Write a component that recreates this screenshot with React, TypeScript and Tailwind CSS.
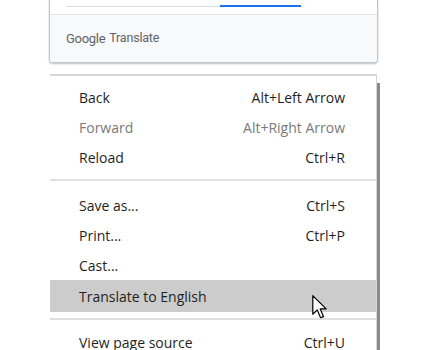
const GROUPS: { label: string; shortcut?: string; disabled?: boolean; active?: boolean }[][] = [
  [
    { label: "Back", shortcut: "Alt+Left Arrow" },
    { label: "Forward", shortcut: "Alt+Right Arrow", disabled: true },
    { label: "Reload", shortcut: "Ctrl+R" },
  ],
  [
    { label: "Save as...", shortcut: "Ctrl+S" },
    { label: "Print...", shortcut: "Ctrl+P" },
    { label: "Cast..." },
    { label: "Translate to English", active: true },
  ],
  [{ label: "View page source", shortcut: "Ctrl+U" }],
];

function Cursor() {
  return (
    <svg
      className="absolute left-[262px] top-[15px]"
      width="16"
      height="24"
      viewBox="0 0 13 20"
    >
      <path
        d="M0.5 0.5 L0.5 16 L4.2 12.4 L7 19 L9.4 18 L6.7 11.6 L11.6 11.6 Z"
        fill="#fff"
        stroke="#000"
        strokeWidth="1"
        strokeLinejoin="round"
      />
    </svg>
  );
}

export default function App() {
  return (
    <div className="w-[427px] h-[350px] bg-white overflow-hidden font-['Open_Sans',sans-serif]">
      {/* translate bubble, top cut off */}
      <div className="ml-[49px] w-[329px] border-x border-b border-[#c4c4c4] rounded-b-[4px] shadow-[0_1px_2px_rgba(0,0,0,0.25)] overflow-hidden">
        <div className="h-[15px] bg-white border-b border-[#e3e3e3] pl-[16px] pt-[5px]">
          <div className="flex w-[235px]">
            <div className="w-[154px] h-px mt-px bg-[#dadce0]" />
            <div className="w-[81px] h-[2px] bg-[#1a73e8]" />
          </div>
        </div>
        <div className="h-[47px] bg-[#f8f9fa] pl-[16px] flex items-center text-[12.5px] text-[#5f6368] font-['Roboto',sans-serif]">
          <span className="text-[13px] tracking-[-0.3px]">Google</span>
          <span className="ml-[4px] tracking-[-0.2px]">Translate</span>
        </div>
      </div>

      {/* context menu */}
      <div className="mt-[11px] ml-[50px] w-[330px] relative">
        <div className="w-[327px] bg-white border-t-2 border-r border-[#d6d6d6] pt-[6px] text-[14px] text-[#1f1f1f]">
          {GROUPS.map((group, gi) => (
            <div key={gi}>
              {gi > 0 && (
                <div className={gi === 1 ? "pt-[7px] pb-[9px]" : "pt-[6px] pb-[7px]"}>
                  <div className="h-[2px] bg-[#e0e0e0]" />
                </div>
              )}
              {group.map((item) => (
                <div
                  key={item.label}
                  className={`relative flex items-center justify-between pl-[29px] pr-[31px] ${
                    item.active ? "h-[32px] bg-[#cccccc]" : "h-[30px]"
                  } ${item.disabled ? "text-[#7a7a7a]" : ""}`}
                >
                  <span>{item.label}</span>
                  {item.shortcut && <span>{item.shortcut}</span>}
                  {item.active && <Cursor />}
                </div>
              ))}
            </div>
          ))}
        </div>
        <div className="absolute right-0 top-[9px] bottom-0 w-[3px] bg-[#8a8a8a]" />
      </div>
    </div>
  );
}
